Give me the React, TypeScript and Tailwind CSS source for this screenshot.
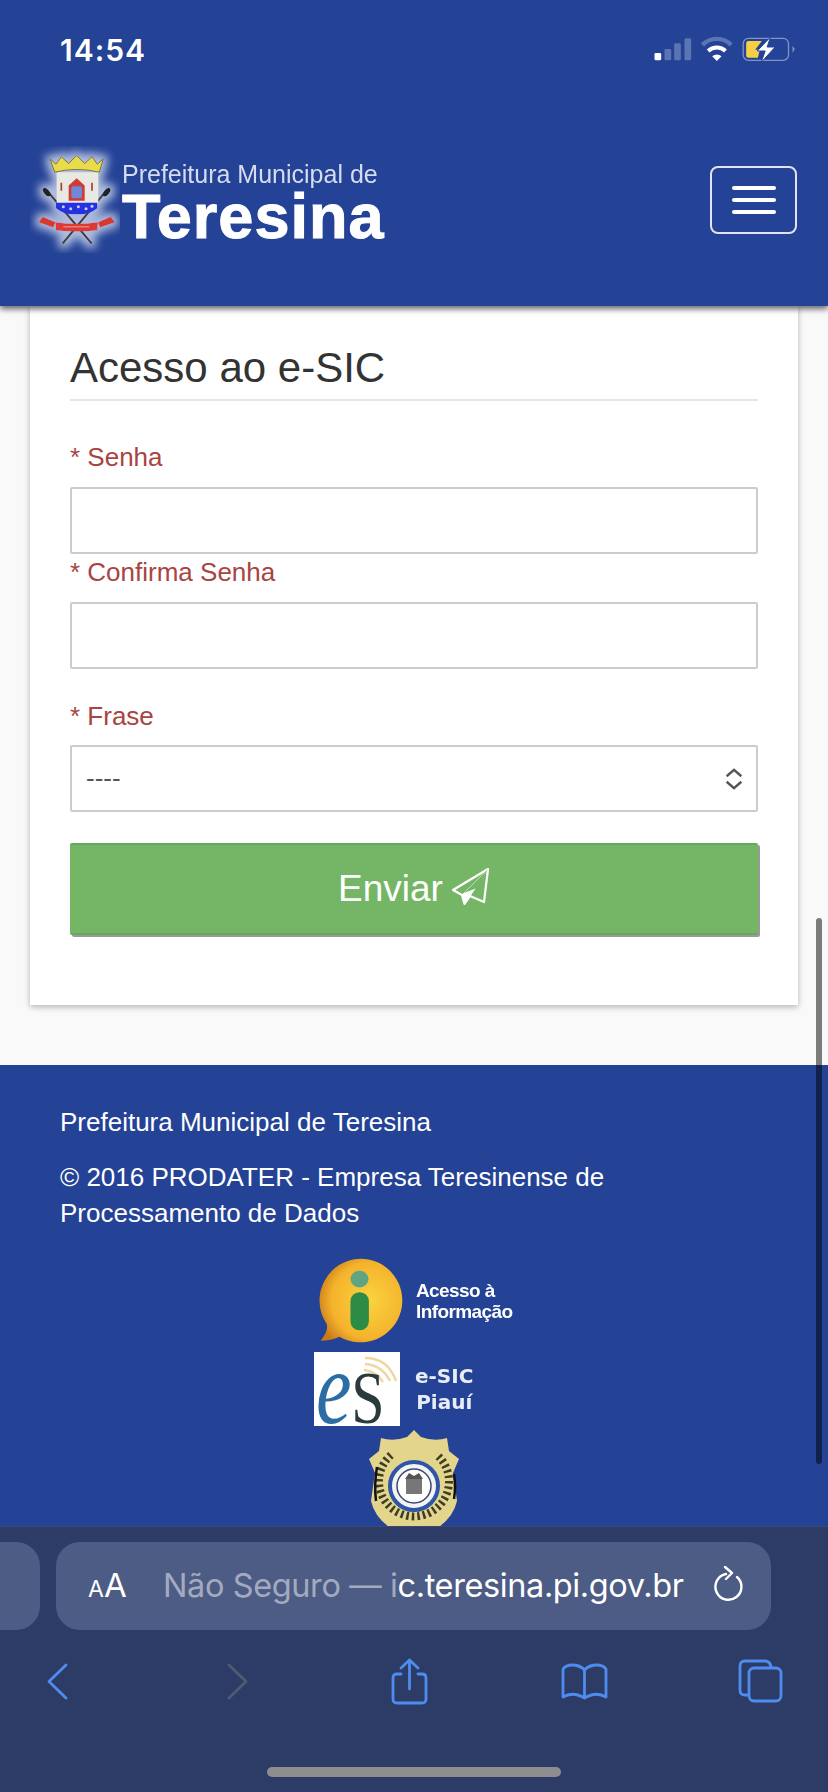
const sans = "font-['Liberation_Sans',Arial,sans-serif]";

const StatusIcons = () => (
  <svg viewBox="60 30 440 90" className="w-[147px] h-[30px]">
    <rect x="70" y="84" width="20" height="22" rx="4" fill="#fff" />
    <rect x="100" y="72" width="20" height="34" rx="4" fill="#5b74b3" />
    <rect x="129" y="55" width="20" height="51" rx="4" fill="#5b74b3" />
    <rect x="160" y="40" width="20" height="66" rx="4" fill="#5b74b3" />
    <path d="M214 60 A60 60 0 0 1 300 60" fill="none" stroke="#5b74b3" strokeWidth="13" />
    <path d="M231 78 A38 38 0 0 1 283 78" fill="none" stroke="#fff" strokeWidth="12" />
    <path d="M257 108 L243 94 A20 20 0 0 1 271 94 Z" fill="#fff" />
    <rect x="336" y="40" width="136" height="66" rx="16" fill="none" stroke="#7f93c6" strokeWidth="4" />
    <path d="M484 62 L491 72 L484 84 Z" fill="#7f93c6" />
    <path d="M352 48 H392 L372 74 H386 L380 98 H352 Q345 98 345 90 V56 Q345 48 352 48 Z" fill="#f6cf45" />
    <path d="M418 36 L378 78 H402 L390 112 L432 66 H408 Z" fill="#fff" stroke="#244296" strokeWidth="3" />
  </svg>
);

const Crest = () => (
  <svg viewBox="30 30 270 320" className="w-[90px] h-[107px]">
    <defs>
      <filter id="halo" x="-30%" y="-30%" width="160%" height="160%">
        <feMorphology in="SourceAlpha" operator="dilate" radius="12" result="fat" />
        <feGaussianBlur in="fat" stdDeviation="12" result="blurred" />
        <feFlood floodColor="#d3dcf2" floodOpacity="0.8" />
        <feComposite in2="blurred" operator="in" result="glow" />
        <feGaussianBlur in="SourceGraphic" stdDeviation="1.4" result="art" />
        <feMerge>
          <feMergeNode in="glow" />
          <feMergeNode in="art" />
        </feMerge>
      </filter>
    </defs>
    <g filter="url(#halo)">
      <path d="M78 160 L215 322 M262 160 L128 322" stroke="#3d3d3d" strokeWidth="6" />
      <ellipse cx="80" cy="168" rx="8" ry="15" fill="#222" transform="rotate(-40 80 168)" />
      <ellipse cx="260" cy="168" rx="8" ry="15" fill="#222" transform="rotate(40 260 168)" />
      <path d="M110 108 H235 V205 H110 Z" fill="#e9e9e4" />
      <path d="M90 68 L108 84 L124 62 L146 82 L170 58 L194 82 L216 62 L232 84 L250 68 L238 108 Q170 92 104 108 Z" fill="#e9dc4c" stroke="#7d6f1b" strokeWidth="3" />
      <path d="M146 148 L170 126 L194 148 V194 H146 Z" fill="#cf3a35" />
      <rect x="154" y="150" width="32" height="36" rx="6" fill="#6f88d8" />
      <path d="M124 140 v24 M216 140 v24" stroke="#a83c33" strokeWidth="5" />
      <path d="M108 200 H232 V216 Q205 238 170 234 Q135 238 108 216 Z" fill="#2533e0" />
      <circle cx="130" cy="212" r="4.5" fill="#c6d2f5" />
      <circle cx="152" cy="218" r="4.5" fill="#c6d2f5" />
      <circle cx="175" cy="212" r="4.5" fill="#c6d2f5" />
      <circle cx="198" cy="218" r="4.5" fill="#c6d2f5" />
      <circle cx="216" cy="210" r="4.5" fill="#c6d2f5" />
      <path d="M56 258 L68 242 L106 258 L100 274 Z" fill="#d8392f" />
      <path d="M234 258 L272 242 L285 258 L240 274 Z" fill="#d8392f" />
      <path d="M106 258 Q170 268 234 258 L232 282 Q170 290 108 282 Z" fill="#dc3b34" />
      <path d="M130 272 H208" stroke="#f2b3b3" strokeWidth="2.5" />
    </g>
  </svg>
);

const AccessBubble = () => (
  <svg viewBox="80 50 260 260" className="w-[87px] h-[87px] shrink-0">
    <defs>
      <radialGradient id="bubble" cx="0.6" cy="0.5" r="0.65">
        <stop offset="0%" stopColor="#fbd33f" />
        <stop offset="70%" stopColor="#f4b32c" />
        <stop offset="100%" stopColor="#c97a18" />
      </radialGradient>
    </defs>
    <path d="M212 55 A125 125 0 1 1 150 288 Q125 300 94 300 Q118 270 112 250 A125 125 0 0 1 212 55 Z" fill="url(#bubble)" />
    <ellipse cx="210" cy="116" rx="27" ry="25" fill="#5fa584" />
    <rect x="183" y="155" width="55" height="114" rx="27" fill="#2c8b45" />
  </svg>
);

const EsLogo = () => (
  <div className="relative w-[86px] h-[74px] bg-white shrink-0 font-['Liberation_Serif',serif]">
    <svg viewBox="0 0 86 74" className="absolute inset-0 w-[86px] h-[74px]" fill="none" stroke="#f0d6a0" strokeWidth="2.4">
      <path d="M51 6 Q74 6 82 29 M51 12 Q68 13 76 29 M50 18 Q62 19 69 30" />
    </svg>
    <span className="absolute left-[2px] top-[11px] block leading-[50px] text-[80px] italic text-[#2a6ea5] scale-y-[1.3]">e</span>
    <span className="absolute left-[33px] top-[21px] block leading-[50px] text-[75px] text-[#2b3a3d] scale-x-[0.8]">S</span>
  </div>
);

const PoliceShield = () => (
  <svg viewBox="0 0 90 110" className="w-[90px] h-[110px] shrink-0">
    <path d="M45 1 L52 8 Q66 13 78 9 L80 22 L90 30 L84 44 L88 72 Q82 98 45 110 Q8 98 2 72 L6 44 L0 30 L10 22 L12 9 Q24 13 38 8 Z" fill="#e3d68c" />
    <path d="M22 26 A35 35 0 1 0 68 26" fill="none" stroke="#3f3d28" strokeWidth="8" strokeDasharray="2.5 3" />
    <circle cx="45" cy="57" r="24" fill="#f3f3f3" stroke="#2f55a8" strokeWidth="4" />
    <circle cx="45" cy="57" r="17" fill="#fff" stroke="#3c4a70" strokeWidth="1.5" />
    <rect x="37" y="50" width="16" height="15" fill="#777" />
    <path d="M36 50 L40 44 L45 47 L50 44 L54 50 Z" fill="#555" />
    <path d="M8 38 Q5 55 7 72 M85 45 Q87 58 85 70" fill="none" stroke="#111" strokeWidth="2.5" />
  </svg>
);

const Field = ({ label, className }: { label: string; className: string }) => (
  <div className={className}>
    <label className="block h-[36px] leading-[36px] text-[26px] text-[#a94442]">* {label}</label>
    <input className="mt-[12px] block w-full h-[67px] bg-white border-2 border-[#ccc] rounded-[2px]" />
  </div>
);

export default function App() {
  return (
    <div className={`relative h-[1792px] w-[828px] overflow-hidden flex flex-col bg-[#f9f9f9] ${sans}`}>
      <header className="relative z-10 h-[306px] shrink-0 bg-[#244296] shadow-[0_3px_6px_rgba(0,0,0,0.6)]">
        <div className="flex items-start justify-between pt-[32px] pl-[60px] pr-[30px] h-[146px]">
          <span className="font-['Inter',sans-serif] font-semibold text-[30px] tracking-[1px] leading-[36px] text-white">14:54</span>
          <div className="pt-[3px]">
            <StatusIcons />
          </div>
        </div>
        <div className="flex items-start justify-between pl-[30px] pr-[31px]">
          <div className="flex">
            <Crest />
            <div className="ml-[2px] blur-[0.5px]">
              <div className="mt-[15px] text-[25px] leading-[26px] text-[#d5dcee] whitespace-nowrap">Prefeitura Municipal de</div>
              <div className="text-[63px] leading-[58px] tracking-[1px] font-bold text-white [-webkit-text-stroke:1px_white]">Teresina</div>
            </div>
          </div>
          <button className="mt-[20px] w-[87px] h-[68px] border-2 border-[#e0e4ef] rounded-[8px] flex flex-col items-center justify-center gap-[8px]">
            <span className="block w-[44px] h-[4px] rounded-full bg-white" />
            <span className="block w-[44px] h-[4px] rounded-full bg-white" />
            <span className="block w-[44px] h-[4px] rounded-full bg-white" />
          </button>
        </div>
      </header>

      <main className="shrink-0 px-[30px] pb-[60px]">
        <div className="h-[699px] bg-white px-[40px] shadow-[0_2px_6px_rgba(0,0,0,0.28)]">
          <h2 className="pt-[40px] pb-[9px] text-[42px] leading-[44px] text-[#333] border-b-2 border-[#e6e6e6]">Acesso ao e-SIC</h2>
          <Field label="Senha" className="mt-[38px]" />
          <Field label="Confirma Senha" className="" />
          <div className="mt-[29px]">
            <label className="block h-[36px] leading-[36px] text-[26px] text-[#a94442]">* Frase</label>
            <div className="relative mt-[11px]">
              <select className="block w-full h-[67px] appearance-none bg-white border-2 border-[#ccc] rounded-[2px] pl-[14px] text-[26px] text-[#555]">
                <option>----</option>
              </select>
              <svg viewBox="0 0 20 24" className="absolute right-[14px] top-[23px] w-[20px] h-[22px]" fill="none" stroke="#555" strokeWidth="2.6">
                <path d="M2 9 L10 2 L18 9 M2 15 L10 22 L18 15" />
              </svg>
            </div>
          </div>
          <button className="mt-[31px] w-full h-[92px] flex items-center justify-center gap-[9px] bg-[#74b666] border-t-2 border-b-2 border-[#66a95a] rounded-[2px] text-white text-[37px] shadow-[2px_2px_0_#9a9a9a]">
            Enviar
            <svg viewBox="0 0 38 38" className="w-[38px] h-[38px] mt-[-4px]" fill="none" stroke="#fff" strokeWidth="2.2" strokeLinejoin="round">
              <path d="M36 1 L1 22 L10 27 L12.5 36 L18 28 L32 34 Z" />
              <path d="M36 1 L10 27 L12.5 36 L18 28 Z" fill="#fff" strokeWidth="1" />
              <path d="M36 1 L12 25 L25 20 Z" fill="#74b666" stroke="none" />
            </svg>
          </button>
        </div>
      </main>

      <footer className="flex-1 min-h-0 overflow-hidden bg-[#244296] pt-[39px] text-white text-[26px] leading-[36px]">
        <p className="px-[60px]">Prefeitura Municipal de Teresina</p>
        <p className="mt-[19px] px-[60px]">© 2016 PRODATER - Empresa Teresinense de Processamento de Dados</p>
        <div className="mt-[26px] flex flex-col items-center">
          <div className="flex w-[196px] items-center">
            <AccessBubble />
            <div className="ml-[13px] font-bold text-[19px] leading-[21px] tracking-[-0.6px] blur-[0.4px]">
              Acesso à<br />Informação
            </div>
          </div>
          <div className="mt-[8px] flex w-[200px] items-center">
            <EsLogo />
            <div className="ml-[15px] font-['DejaVu_Sans',sans-serif] font-bold text-[20px] leading-[26px] text-center text-[#e8ecf6] blur-[0.4px]">
              e-SIC<br />Piauí
            </div>
          </div>
          <div className="mt-[3px]">
            <PoliceShield />
          </div>
        </div>
      </footer>

      <div className="absolute right-[6px] top-[918px] w-[6px] h-[546px] rounded-full bg-black/50" />

      <nav className="relative z-10 h-[266px] shrink-0 bg-[#2d3c66] border-t border-[#3f4a6a]">
        <div className="flex gap-[16px] pt-[15px]">
          <div className="w-[40px] h-[88px] rounded-r-[24px] bg-[#4d5c84]" />
          <div className="w-[715px] h-[88px] rounded-[24px] bg-[#4d5c84] flex items-center pl-[32px] font-['Inter',sans-serif]">
            <span className="text-white w-[43px] whitespace-nowrap"><span className="text-[23px]">A</span><span className="text-[33px]">A</span></span>
            <span className="ml-[32px] text-[32.5px] tracking-[-0.4px] whitespace-nowrap text-[#a3aac0]">Não Seguro — i<span className="text-white">c.teresina.pi.gov.br</span></span>
            <svg viewBox="0 0 30 36" className="absolute left-[713px] top-[39px] w-[30px] h-[36px]" fill="none" stroke="#fff" strokeWidth="2.4" strokeLinecap="round" strokeLinejoin="round">
              <path d="M13 8 A13 13 0 1 0 24 11 M12 1 L19 7 L13 13" />
            </svg>
          </div>
        </div>
        <div className="mt-[26px] h-[50px] flex items-center pl-[47px]">
          <svg viewBox="0 0 21 37" className="w-[21px] h-[37px]" fill="none" stroke="#4f8cf0" strokeWidth="2.8" strokeLinecap="round" strokeLinejoin="round">
            <path d="M19 2 L2 18.5 L19 35" />
          </svg>
          <svg viewBox="0 0 21 37" className="ml-[159px] w-[21px] h-[37px]" fill="none" stroke="#4f5a75" strokeWidth="2.8" strokeLinecap="round" strokeLinejoin="round">
            <path d="M2 2 L19 18.5 L2 35" />
          </svg>
          <svg viewBox="0 0 37 47" className="ml-[143px] w-[37px] h-[47px]" fill="none" stroke="#4f8cf0" strokeWidth="2.8" strokeLinecap="round" strokeLinejoin="round">
            <path d="M10 16 H6 Q2 16 2 20 V41 Q2 45 6 45 H31 Q35 45 35 41 V20 Q35 16 31 16 H27 M18.5 31 V2 M10 10 L18.5 2 L27 10" />
          </svg>
          <svg viewBox="0 0 47 37" className="ml-[133px] w-[47px] h-[37px]" fill="none" stroke="#4f8cf0" strokeWidth="2.8" strokeLinecap="round" strokeLinejoin="round">
            <path d="M23.5 7 Q19 2 11 2 Q5 2 2 6 V34 Q12 28 23.5 35 Q35 28 45 34 V6 Q42 2 36 2 Q28 2 23.5 7 Z M23.5 7 V35" />
          </svg>
          <svg viewBox="0 0 45 44" className="ml-[130px] w-[45px] h-[44px]" fill="none" stroke="#4f8cf0" strokeWidth="2.8" strokeLinejoin="round">
            <path d="M10 36 H7 Q2 36 2 31 V7 Q2 2 7 2 H27 Q32 2 33 8" />
            <rect x="11" y="9" width="32" height="33" rx="5" />
          </svg>
        </div>
        <div className="absolute left-[267px] top-[240px] w-[294px] h-[10px] rounded-full bg-[#8e8e8e]" />
      </nav>
    </div>
  );
}
